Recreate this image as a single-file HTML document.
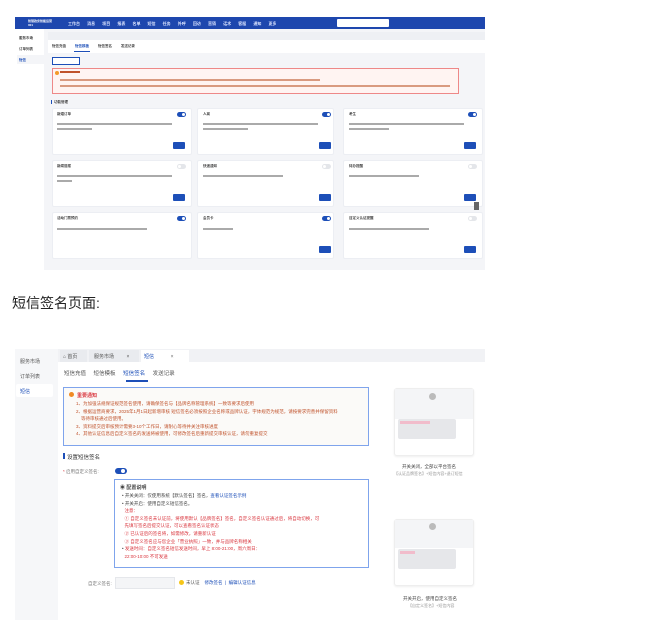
<!DOCTYPE html>
<html><head><meta charset="utf-8"><style>
*{margin:0;padding:0;box-sizing:border-box}
body{width:659px;height:625px;background:#fff;position:relative;overflow:hidden;font-family:"Liberation Sans","Noto Sans CJK SC",sans-serif;color:#333}
.a{position:absolute}
.t{font-size:3.5px;color:#444;white-space:nowrap;overflow:hidden;font-weight:bold}
.card{position:absolute;background:#fff;border:1px solid #eceef3;border-radius:2px}
.tg{position:absolute;width:9px;height:5px;border-radius:3px;background:#1d4fb8}
.tg::after{content:"";position:absolute;right:1px;top:1px;width:3px;height:3px;border-radius:50%;background:#fff}
.tg.off{background:#e4e6ea}.tg.off::after{left:1px;right:auto}
.btn{position:absolute;width:12px;height:7px;background:#1d4fb8;border-radius:1px}
.s{font-size:5px;color:#555;white-space:nowrap}
.r{color:#d9363e}
.ln{position:absolute;height:1.5px;background:#aaa}
</style></head><body>
<div class="a" style="left:15px;top:17px;width:470px;height:253px;background:#f4f5f8"></div>
<div class="a" style="left:15px;top:17px;width:470px;height:12px;background:#1e47ae"></div>
<div class="a t" style="left:28px;top:19px;color:#fff;font-size:3px">智慧政务智能运营<br>001</div>
<div class="a t" style="left:68px;top:21px;color:#dbe4ff;font-size:4px;word-spacing:6px">工作台 消息 项目 报表 名单 短信 任务 外呼 回访 营销 话术 客服 通知 更多</div>
<div class="a" style="left:337px;top:19px;width:52px;height:8px;background:#fff;border-radius:1px"></div>
<div class="a" style="left:15px;top:29px;width:29px;height:241px;background:#fff"></div>
<div class="a t" style="left:19px;top:36px">服务市场</div>
<div class="a t" style="left:19px;top:47px">订单列表</div>
<div class="a" style="left:17px;top:55px;width:27px;height:9px;background:#f4f5f8"></div>
<div class="a t" style="left:19px;top:58px;color:#1d4fb8">短信</div>
<div class="a" style="left:48px;top:32px;width:437px;height:8px;background:#eef0f4"></div>
<div class="a" style="left:48px;top:40px;width:437px;height:13px;background:#fff"></div>
<div class="a t" style="left:52px;top:44px;word-spacing:8px">短信充值 <span style="color:#1d4fb8">短信模板</span> 短信签名 发送记录</div>
<div class="a" style="left:74px;top:51px;width:16px;height:1px;background:#1d4fb8"></div>
<div class="a" style="left:52px;top:57px;width:28px;height:8px;border:1px solid #1d4fb8;background:#fff"></div>
<div class="a" style="left:52px;top:68px;width:407px;height:26px;border:1px solid #e88;background:#fff4f2"></div>
<div class="a" style="left:55px;top:71px;width:4px;height:4px;border-radius:50%;background:#f39a2b"></div>
<div class="a" style="left:60px;top:71px;width:20px;height:2px;background:#c0522b"></div>
<div class="a" style="left:60px;top:79px;width:260px;height:2px;background:#d99a80"></div>
<div class="a" style="left:60px;top:85px;width:390px;height:2px;background:#d99a80"></div>
<div class="a" style="left:51px;top:100px;width:1px;height:4px;background:#1d4fb8"></div>
<div class="a t" style="left:54px;top:100px">功能管理</div>
<div class="card" style="left:52px;top:108px;width:140px;height:47px"></div>
<div class="card" style="left:197px;top:108px;width:137px;height:47px"></div>
<div class="card" style="left:343px;top:108px;width:140px;height:47px"></div>
<div class="card" style="left:52px;top:160px;width:140px;height:47px"></div>
<div class="card" style="left:197px;top:160px;width:137px;height:47px"></div>
<div class="card" style="left:343px;top:160px;width:140px;height:47px"></div>
<div class="card" style="left:52px;top:212px;width:140px;height:47px"></div>
<div class="card" style="left:197px;top:212px;width:137px;height:47px"></div>
<div class="card" style="left:343px;top:212px;width:140px;height:47px"></div>
<div class="a t" style="left:57px;top:112px">新婚订单</div><div class="a t" style="left:203px;top:112px">入离</div><div class="a t" style="left:349px;top:112px">考生</div>
<div class="a t" style="left:57px;top:164px">新闻简报</div><div class="a t" style="left:203px;top:164px">快递通知</div><div class="a t" style="left:349px;top:164px">待办提醒</div>
<div class="a t" style="left:57px;top:216px">活动门票预约</div><div class="a t" style="left:203px;top:216px">会员卡</div><div class="a t" style="left:349px;top:216px">自定义认证提醒</div>
<div class="ln" style="left:57px;top:123px;width:115px"></div><div class="ln" style="left:57px;top:128px;width:35px"></div>
<div class="ln" style="left:203px;top:123px;width:115px"></div><div class="ln" style="left:203px;top:128px;width:45px"></div>
<div class="ln" style="left:349px;top:123px;width:115px"></div><div class="ln" style="left:349px;top:128px;width:40px"></div>
<div class="ln" style="left:57px;top:175px;width:115px"></div><div class="ln" style="left:57px;top:180px;width:15px"></div>
<div class="ln" style="left:203px;top:175px;width:80px"></div>
<div class="ln" style="left:349px;top:175px;width:70px"></div>
<div class="ln" style="left:57px;top:228px;width:90px"></div>
<div class="ln" style="left:203px;top:228px;width:30px"></div>
<div class="ln" style="left:349px;top:228px;width:80px"></div>
<div class="tg" style="left:177px;top:112px"></div><div class="tg" style="left:322px;top:112px"></div><div class="tg" style="left:468px;top:112px"></div>
<div class="tg off" style="left:177px;top:164px"></div><div class="tg off" style="left:322px;top:164px"></div><div class="tg off" style="left:468px;top:164px"></div>
<div class="tg" style="left:177px;top:216px"></div><div class="tg" style="left:322px;top:216px"></div><div class="tg off" style="left:468px;top:216px"></div>
<div class="btn" style="left:173px;top:142px"></div><div class="btn" style="left:319px;top:142px"></div><div class="btn" style="left:464px;top:142px"></div>
<div class="btn" style="left:173px;top:194px"></div><div class="btn" style="left:319px;top:194px"></div><div class="btn" style="left:464px;top:194px"></div>
<div class="btn" style="left:319px;top:246px"></div><div class="btn" style="left:464px;top:246px"></div>
<div class="a" style="left:474px;top:202px;width:5px;height:8px;background:#666"></div>

<div class="a" style="left:12px;top:293px;font-size:14px;color:#222">短信签名页面:</div>

<div class="a" style="left:15px;top:349px;width:470px;height:271px;background:#fff"></div>
<div class="a" style="left:15px;top:349px;width:43px;height:271px;background:#f6f7f9"></div>
<div class="a s" style="left:20px;top:358px">服务市场</div>
<div class="a s" style="left:20px;top:373px">订单列表</div>
<div class="a" style="left:16px;top:384px;width:37px;height:13px;background:#fff;border-radius:2px"></div>
<div class="a s" style="left:20px;top:388px;color:#1d4fb8">短信</div>
<div class="a" style="left:58px;top:349px;width:427px;height:13px;background:#f1f2f5"></div>
<div class="a" style="left:60px;top:350px;width:27px;height:12px;background:#e9ebef"></div>
<div class="a s" style="left:63px;top:353px">⌂ 首页</div>
<div class="a" style="left:89px;top:350px;width:50px;height:12px;background:#e9ebef"></div>
<div class="a s" style="left:94px;top:353px">服务市场 &nbsp;&nbsp;&nbsp;&nbsp;&nbsp;&nbsp;&nbsp;&nbsp;×</div>
<div class="a" style="left:141px;top:350px;width:48px;height:12px;background:#fff"></div>
<div class="a s" style="left:144px;top:353px;color:#1d4fb8">短信 &nbsp;&nbsp;&nbsp;&nbsp;&nbsp;&nbsp;&nbsp;&nbsp;&nbsp;&nbsp;&nbsp;<span style="color:#666">×</span></div>
<div class="a s" style="left:64px;top:369px;word-spacing:6px;font-size:5.5px">短信充值 短信模板 <span style="color:#1d4fb8">短信签名</span> 发送记录</div>
<div class="a" style="left:126px;top:380px;width:22px;height:1.5px;background:#1d4fb8"></div>
<div class="a" style="left:63px;top:387px;width:306px;height:59px;border:1px solid #7fa4ec;background:#fbfaf8"></div>
<div class="a" style="left:69px;top:392px;width:5px;height:5px;border-radius:50%;background:#f08a24"></div>
<div class="a s" style="left:77px;top:392px;color:#d9363e;font-weight:bold">重要通知</div>
<div class="a s r" style="left:76px;top:400px;line-height:7.5px;font-size:4.5px;color:#c0522b">1、为加强法规保证规范签名使用，请确保签名与【品牌名称管理系统】一致等要求后使用<br>2、根据运营商要求，2025年1月1日起新增审核 短信签名必须按照企业名称或品牌认证，字体规范为规范，请按要求完善并保留资料<br>&nbsp;&nbsp;&nbsp;&nbsp;等待审核通过后使用。<br>3、资料提交后审核预计需要3-10个工作日，请耐心等待并关注审核进度<br>4、其他认证信息后自定义签名的发送将被使用，可修改签名后重新提交审核认证，请勿重复提交</div>
<div class="a" style="left:63px;top:453px;width:1.5px;height:6px;background:#1d4fb8"></div>
<div class="a s" style="left:67px;top:453px;font-size:5.5px;color:#333">设置短信签名</div>
<div class="a s" style="left:63px;top:469px;color:#777;font-size:4.5px"><span class="r">*</span> 启用自定义签名:</div>
<div class="a" style="left:115px;top:468px;width:12px;height:6px;border-radius:3px;background:#1d4fb8"></div>
<div class="a" style="left:121px;top:469px;width:4px;height:4px;border-radius:50%;background:#fff"></div>
<div class="a" style="left:114px;top:479px;width:255px;height:89px;border:1px solid #7fa4ec;background:#fff"></div>
<div class="a s" style="left:120px;top:484px;font-weight:bold;color:#444">◉ 配置说明</div>
<div class="a s" style="left:122px;top:492px;line-height:7.6px;font-size:4.5px;color:#444">• 开关关闭：仅使用系统【默认签名】签名，<span style="color:#1d4fb8">查看认证签名示例</span><br>• 开关开启：使用自定义短信签名。<br><span class="r">&nbsp;&nbsp;注意：<br>&nbsp;&nbsp;① 自定义签名未认证前，将使用默认【品牌签名】签名，自定义签名认证通过后，将自动切换，可<br>&nbsp;&nbsp;先填写签名后提交认证，可以查看签名认证状态<br>&nbsp;&nbsp;② 已认证后的签名将，如需修改，请重新认证<br>&nbsp;&nbsp;③ 自定义签名应与您企业「营业执照」一致，并与品牌名称相关</span><br>• <span class="r">发送时间：自定义签名短信发送时间，早上 8:00-21:00，周六周日：<br>&nbsp;&nbsp;22:00-10:00 不可发送</span></div>
<div class="a s" style="left:88px;top:581px;color:#777;font-size:4.5px">自定义签名:</div>
<div class="a" style="left:115px;top:577px;width:60px;height:12px;background:#f4f5f7;border:1px solid #e5e7eb"></div>
<div class="a" style="left:179px;top:580px;width:5px;height:5px;border-radius:50%;background:#f5c518"></div>
<div class="a s" style="left:186px;top:580px;font-size:4.5px">未认证 &nbsp;&nbsp;&nbsp;<span style="color:#1d4fb8">修改签名 &nbsp;| &nbsp;编辑认证信息</span></div>
<div class="a" style="left:394px;top:388px;width:80px;height:68px;background:#fff;border:1px solid #eee;border-radius:3px;box-shadow:0 1px 2px #eee"></div>
<div class="a" style="left:395px;top:389px;width:78px;height:30px;background:#f4f5f7"></div>
<div class="a" style="left:429px;top:393px;width:7px;height:7px;border-radius:50%;background:#bbb"></div>
<div class="a" style="left:398px;top:419px;width:58px;height:20px;background:#e6e7ea;border-radius:2px"></div>
<div class="a" style="left:400px;top:421px;width:30px;height:3px;background:#f1bccb"></div>
<div class="a s" style="left:402px;top:464px;font-size:4.5px;color:#444">开关关闭，全部以平台签名</div>
<div class="a s" style="left:394px;top:471px;font-size:4px;color:#999">【认证品牌签名】+短信内容+退订短信</div>
<div class="a" style="left:394px;top:519px;width:80px;height:67px;background:#fff;border:1px solid #eee;border-radius:3px;box-shadow:0 1px 2px #eee"></div>
<div class="a" style="left:395px;top:520px;width:78px;height:28px;background:#f4f5f7"></div>
<div class="a" style="left:429px;top:523px;width:7px;height:7px;border-radius:50%;background:#bbb"></div>
<div class="a" style="left:398px;top:549px;width:58px;height:20px;background:#e6e7ea;border-radius:2px"></div>
<div class="a" style="left:400px;top:551px;width:15px;height:3px;background:#f1bccb"></div>
<div class="a s" style="left:403px;top:596px;font-size:4.5px;color:#444">开关开启，使用自定义签名</div>
<div class="a s" style="left:408px;top:603px;font-size:4px;color:#999">【自定义签名】+短信内容</div>
</body></html>
